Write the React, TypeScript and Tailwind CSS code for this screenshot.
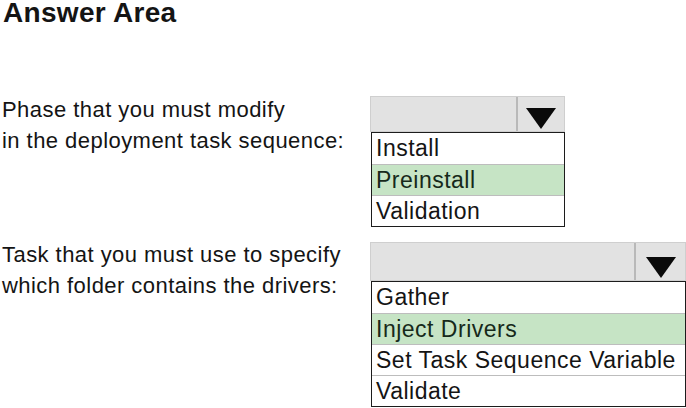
type Question = {
  label: string[];
  options: string[];
  selected: number;
  width: string;
  barHeight: string;
  buttonWidth: string;
  offset: string;
};

const QUESTIONS: Question[] = [
  {
    label: ["Phase that you must modify", "in the deployment task sequence:"],
    options: ["Install", "Preinstall", "Validation"],
    selected: 1,
    width: "w-[195px]",
    barHeight: "h-[36px]",
    buttonWidth: "w-[48px]",
    offset: "mt-[2px]",
  },
  {
    label: ["Task that you must use to specify", "which folder contains the drivers:"],
    options: ["Gather", "Inject Drivers", "Set Task Sequence Variable", "Validate"],
    selected: 1,
    width: "w-[316px]",
    barHeight: "h-[39px]",
    buttonWidth: "w-[51px]",
    offset: "mt-[3px]",
  },
];

function Caret() {
  return (
    <svg width="30" height="21" viewBox="0 0 30 21">
      <polygon points="0,0 30,0 15,21" fill="#0a0a0a" />
    </svg>
  );
}

function Dropdown({ question }: { question: Question }) {
  return (
    <div className={`${question.width} ${question.offset} flex flex-col`}>
      <div className={`${question.barHeight} flex border border-[#cfcfcf] bg-[#e2e2e2]`}>
        <div className="flex-1" />
        <div
          className={`${question.buttonWidth} flex items-end justify-center border-l-2 border-[#b9b9b9] pb-[2px]`}
        >
          <Caret />
        </div>
      </div>
      <ul className="ml-[1px] border border-[#1c1c1c] bg-white">
        {question.options.map((option, index) => (
          <li
            key={option}
            className={`flex h-[31px] items-center px-[4px] text-[23px] leading-none tracking-[0.5px] ${
              index > 0 ? "border-t border-[#bdbdbd]" : ""
            } ${index === question.selected ? "bg-[#c6e4c5] text-[#16291a]" : "text-[#141414]"}`}
          >
            {option}
          </li>
        ))}
      </ul>
    </div>
  );
}

export default function App() {
  return (
    <div
      className="h-[408px] w-[686px] overflow-hidden bg-white text-[#141414]"
      style={{ fontFamily: '"Liberation Sans", Arial, sans-serif' }}
    >
      <h1 className="pl-[3px] text-[28px] font-bold leading-[26px] tracking-[0.3px]">
        Answer Area
      </h1>
      <div className="mt-[68px] flex flex-col gap-[12px]">
        {QUESTIONS.map((question) => (
          <div key={question.label[0]} className="flex">
            <div className="w-[370px] pl-[2px] text-[22px] leading-[31px] tracking-[0.45px]">
              {question.label.map((line) => (
                <div key={line}>{line}</div>
              ))}
            </div>
            <Dropdown question={question} />
          </div>
        ))}
      </div>
    </div>
  );
}
